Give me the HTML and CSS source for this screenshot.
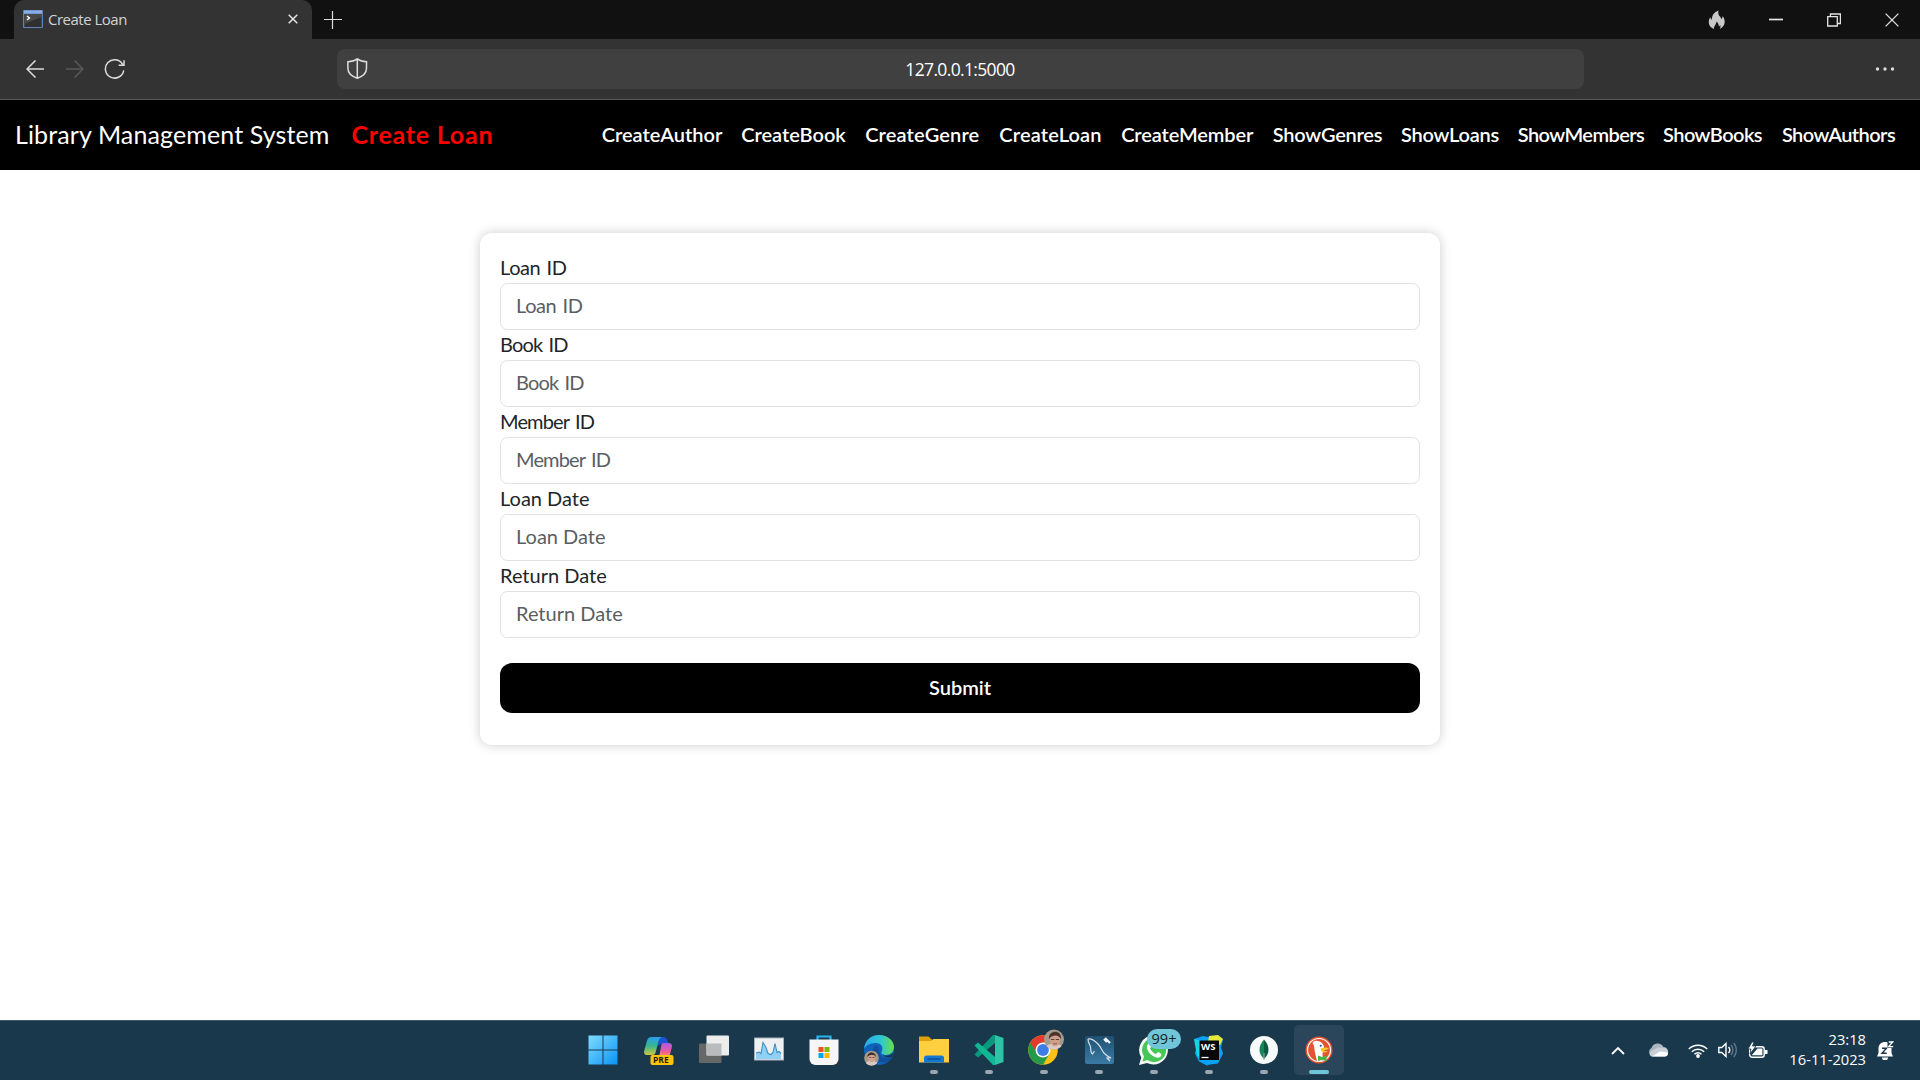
FILE: index.html
```
<!DOCTYPE html>
<html lang="en">
<head>
<meta charset="utf-8">
<title>Create Loan</title>
<link rel="stylesheet" href="styles.css">
</head>
<body>
<header class="tabstrip">
  <div class="tab">
    <svg class="favicon" width="20" height="18" viewBox="0 0 20 18"><rect width="20" height="18" rx="1" fill="#5d84bd"/><rect x="1" y="0.5" width="18" height="3" fill="#86ade8"/><path d="M15 1.2h3v1.3h-3z" fill="#b4a5cd"/><rect x="1.3" y="4" width="17.4" height="13" fill="#303030"/><path d="M1.3 4h17.4v3L1.3 14z" fill="#484848"/><path d="M4 6l2.4 2L4 10" fill="none" stroke="#fff" stroke-width="1.5"/></svg>
    <span class="tab-title">Create Loan</span>
    <svg class="tab-close" width="10" height="10" viewBox="0 0 10 10"><path d="M.7.7l8.6 8.6M9.3.7L.7 9.3" stroke="#e6e6e6" stroke-width="1.5"/></svg>
  </div>
  <svg class="new-tab" width="18" height="18" viewBox="0 0 18 18"><path d="M8.5 0v18M0 8.500h18" stroke="#ddd" stroke-width="1.200"/></svg>
  <div class="window-buttons">
    <svg width="18" height="20" viewBox="0 0 18 20"><path d="M6.2 18.9C2.6 17.8.6 15 .8 11.700c.1-2 .8-3.300 1.500-4.700.2 1.500.7 2.300 1.500 2.800C3.900 5.200 6 2 10.500.4 9.800 3 10.500 5 12 6.500c.7.8 1.100 1.700 1.200 2.600.8-.6 1.300-1.400 1.500-3.200 1.300 1.900 2.100 4 2 6.200-.1 3.100-1.900 5.600-5 6.800.9-1.200 1-2.500.4-3.800-.3.8-.7 1.200-1.300 1.500 0-2.100-.7-3.700-2.300-5-.1 2-.8 2.900-1.700 4.100-.9 1.200-1.100 2.300-.6 3.200z" fill="#c8c8c8"/></svg>
    <svg width="14" height="14" viewBox="0 0 14 14"><path d="M0 6.500h14" stroke="#e4e4e4" stroke-width="1.700"/></svg>
    <svg width="14" height="14" viewBox="0 0 14 14"><path d="M.7 3.700h9.600v9.300H.7zM3.400 3.500V1h10v9.500h-3" fill="none" stroke="#e4e4e4" stroke-width="1.300"/></svg>
    <svg width="14" height="14" viewBox="0 0 14 14"><path d="M.6.6l12.800 12.800M13.400.6L.6 13.400" stroke="#e4e4e4" stroke-width="1.300"/></svg>
  </div>
</header>
<div class="toolbar">
  <div class="nav-buttons">
    <svg width="18" height="18" viewBox="0 0 18 18"><path d="M9.500.5L1 9l8.500 8.500M1 9h17" fill="none" stroke="#dcdcdc" stroke-width="1.500"/></svg>
    <svg width="18" height="18" viewBox="0 0 18 18"><path d="M8.500.5L17 9l-8.500 8.500M17 9H0" fill="none" stroke="#595959" stroke-width="1.500"/></svg>
    <svg width="21" height="21" viewBox="0 0 21 21"><path d="M19.700 12.300A9.200 9.200 0 1 1 18.600 6.300M20 2.300v5h-5.300" fill="none" stroke="#dcdcdc" stroke-width="1.500"/></svg>
  </div>
  <div class="address">
    <svg class="shield" width="21" height="21" viewBox="0 0 21 21"><path d="M10.300.8c2.700 2 5.500 2.900 9.200 2.900v6.600c0 4.500-3.300 8-9.200 9.900C4.400 18.300.9 14.800.9 10.300V3.700c3.700 0 6.700-.9 9.400-2.900zV20" fill="none" stroke="#dedede" stroke-width="1.500"/></svg>
    <span class="url">127.0.0.1:5000</span>
  </div>
  <svg class="more" width="20" height="4" viewBox="0 0 20 4"><g fill="#dcdcdc"><circle cx="2.500" cy="2" r="1.700"/><circle cx="10" cy="2" r="1.700"/><circle cx="17.500" cy="2" r="1.700"/></g></svg>
</div>
<nav class="navbar">
  <span class="brand">Library Management System</span>
  <span class="page-name">Create Loan</span>
  <div class="links">
    <a>CreateAuthor</a><a>CreateBook</a><a class="wide">CreateGenre</a><a class="wide">CreateLoan</a><a class="snug">CreateMember</a><a class="tight">ShowGenres</a><a class="tight">ShowLoans</a><a class="tighter">ShowMembers</a><a class="tighter">ShowBooks</a><a class="tighter">ShowAuthors</a>
  </div>
</nav>
<main>
  <form class="card">
    <label class="sp-id" for="loan-id">Loan ID</label><input class="sp-id" id="loan-id" placeholder="Loan ID">
    <label class="sp-bid" for="book-id">Book ID</label><input class="sp-bid" id="book-id" placeholder="Book ID">
    <label class="sp-bid" for="member-id">Member ID</label><input class="sp-bid" id="member-id" placeholder="Member ID">
    <label for="loan-date">Loan Date</label><input id="loan-date" placeholder="Loan Date">
    <label for="return-date">Return Date</label><input id="return-date" placeholder="Return Date">
    <button type="button">Submit</button>
  </form>
</main>
<footer class="taskbar">
  <div class="apps">
    <div class="app start"><svg width="36" height="36" viewBox="0 0 36 36"><defs><linearGradient id="win" x1="0" y1="0" x2="1" y2="1"><stop offset="0" stop-color="#7fdcff"/><stop offset="1" stop-color="#0a93f5"/></linearGradient></defs><path d="M3.500 3.500h14v14h-14zM18.500 3.500h14v14h-14zM3.500 18.500h14v14h-14zM18.500 18.500h14v14h-14z" fill="url(#win)"/></svg></div>
    <div class="app"><svg width="36" height="36" viewBox="0 0 36 36"><defs><linearGradient id="cpa" x1="0" y1="0" x2="0" y2="1"><stop offset="0" stop-color="#2aa0f0"/><stop offset=".5" stop-color="#37b58f"/><stop offset="1" stop-color="#d0c63a"/></linearGradient><linearGradient id="cpb" x1="0" y1="0" x2="0" y2="1"><stop offset="0" stop-color="#a85be8"/><stop offset=".6" stop-color="#ed5b9d"/><stop offset="1" stop-color="#ff9a52"/></linearGradient></defs><path d="M16 5h6c3 0 4 2 4.500 4l.8 2.500h-6L16 14z" fill="#1d52d0"/><path d="M11 5h10c-3 1-3.500 4-4.500 8l-1.500 6c-.8 3-1.500 4-4 4H6c-3 0-3.300-2.500-2.600-5l2.500-9C6.700 6.500 8 5 11 5z" fill="url(#cpa)"/><path d="M21.500 11h6c3 0 4 1.500 3.300 4.500L28.300 25h-12c2 0 2.300-3 2.700-5l1.300-7z" fill="url(#cpb)"/><rect x="9.500" y="23" width="23" height="10" rx="2" fill="#ffc20e"/></svg><span class="pre">PRE</span></div>
    <div class="app"><svg width="36" height="36" viewBox="0 0 36 36"><rect x="3" y="11.500" width="22.500" height="19.500" rx="1" fill="#666767"/><rect x="10.500" y="3.500" width="22.500" height="20" rx="1" fill="#ededed"/><path d="M10.500 11.500h15v12h-15z" fill="#b9bbbc"/></svg></div>
    <div class="app"><svg width="36" height="36" viewBox="0 0 36 36"><rect x="3.500" y="6" width="29" height="22" fill="#eef0f2" stroke="#a9b3bd"/><path d="M5 27v-6l3-1 2 1.500 2-11 3 5 2 6 3 1 2-2 2-9 2 9 2-1 2 2v5.500z" fill="#8fd0f5"/><path d="M5 21l3-1 2 1.500 2-11 3 5 2 6 3 1 2-2 2-9 2 9 2-1 2 2" fill="none" stroke="#3b8ec4" stroke-width="1.100"/></svg></div>
    <div class="app"><svg width="36" height="36" viewBox="0 0 36 36"><path d="M11.500 9V4.500h13V9" fill="none" stroke="#2bb3ee" stroke-width="2.200"/><path d="M3.500 7.500h29V27a6 6 0 0 1-6 6h-17a6 6 0 0 1-6-6z" fill="#f6f6f6"/><path d="M12.500 15h5v5h-5z" fill="#f25022"/><path d="M18.500 15h5v5h-5z" fill="#7fba00"/><path d="M12.500 21h5v5h-5z" fill="#00a4ef"/><path d="M18.500 21h5v5h-5z" fill="#ffb900"/></svg></div>
    <div class="app"><svg width="36" height="36" viewBox="0 0 36 36"><defs><linearGradient id="eda"><stop offset="0" stop-color="#2aa8ec"/><stop offset=".55" stop-color="#2fc6d4"/><stop offset="1" stop-color="#68df4c"/></linearGradient></defs><circle cx="18" cy="18" r="15" fill="#0e62b8"/><path d="M3 17C4 8 10 3 18 3c9 0 15 6 15 12 0 5-4 8-8 8-3 0-5-1-4.500-3 2-3 1-9-5.500-9-5 0-10 2-12 6z" fill="url(#eda)"/><path d="M22 23c4 1.500 8 .5 11-2.500L31 25c-3 1-7 .5-9-2z" fill="#19384c"/><path d="M15 13c-6 4-4 15 4 17 5 1.500 10-1 12-5-4 2-9 1.500-11-1-3-4-.500-8-5-11z" fill="#124f9c"/><circle cx="10.500" cy="26" r="7.300" fill="#a39a8a"/><path d="M4.800 31c2-3 9.500-3 11.500 0a7.300 7.300 0 0 1-11.500 0z" fill="#d9c9c4"/><ellipse cx="10.800" cy="25.800" rx="3.600" ry="4.600" fill="#d3a18d"/><path d="M6.500 25c-.5-6 8.500-6 8.300 0-1.500-3-6-3-8.300 0z" fill="#3c2a27"/><path d="M8.300 25.500h2m1.200 0h2" stroke="#4a3531" stroke-width=".8"/></svg></div>
    <div class="app running"><svg width="36" height="36" viewBox="0 0 36 36"><path d="M3 4.500h9.500l4 3.500v4H3z" fill="#dea008"/><path d="M3 9h12l2.500-2H33v23.500H3z" fill="#ffcf42"/><path d="M8 30.500V26a2.500 2.500 0 0 1 2.500-2.500h15A2.500 2.500 0 0 1 28 26v4.500z" fill="#1478d2"/><path d="M11.500 27h13" stroke="#0b4a8f" stroke-width="1.300"/></svg></div>
    <div class="app running"><svg width="36" height="36" viewBox="0 0 36 36"><path d="M24 3v30l8.500-3V6z" fill="#2cc4a5"/><path d="M3.500 22.500L22 3l2 0v8L7 25.500z" fill="#099a7d"/><path d="M3.500 13.500L7 10.500 24 25v8l-2 0z" fill="#11b795"/></svg></div>
    <div class="app running"><svg width="42" height="42" viewBox="0 0 42 42"><circle cx="20" cy="21" r="14.800" fill="#fbc116"/><path d="M20 21L7.200 13.600A14.800 14.800 0 0 0 20 35.800l7-12z" fill="#25994a"/><path d="M20 21V13.500h12.800A14.800 14.800 0 0 0 7.200 13.600L14 24z" fill="#e33b2e"/><circle cx="20" cy="21" r="7.500" fill="#fff"/><circle cx="20" cy="21" r="5.900" fill="#3e7de8"/><circle cx="31" cy="10.500" r="10" fill="#a59a8c"/><path d="M23.500 17c3-3 12-3 15 0a10 10 0 0 1-15 0z" fill="#dccac7"/><ellipse cx="32" cy="11" rx="5" ry="6.300" fill="#cf9f8b"/><path d="M26 10c-1-9 13-10 12 0-2-4-8-5-12 0z" fill="#4b342e"/><path d="M28 10.500h3.300m1.500 0H36" stroke="#57403a" stroke-width="1.200"/><path d="M30 14.500q2 1 4 0" fill="none" stroke="#8d5f52"/></svg></div>
    <div class="app running"><svg width="36" height="36" viewBox="0 0 36 36"><defs><linearGradient id="sql" x1="0" y1="0" x2="0" y2="1"><stop offset="0" stop-color="#1f5071"/><stop offset="1" stop-color="#3a7ba5"/></linearGradient></defs><rect x="4" y="4" width="29" height="28" rx="2" fill="url(#sql)"/><path d="M7 7c4-1 7 2 10 5 4 4 4 8 7 10 2 2 4 3 6 4l-4 0 3 3M7 7c0 4 2 5 2.500 8 .5 3 0 6 2 7l2-3" fill="none" stroke="#d2e0e9" stroke-width="1.200"/><path d="M23 7l3 3M24 6l5 5" stroke="#eef4f7" stroke-width="2.200"/></svg></div>
    <div class="app running"><svg width="36" height="36" viewBox="0 0 36 36"><path d="M18 3.500A14.500 14.500 0 1 1 11 31l-8 2 2.300-7.500A14.500 14.500 0 0 1 18 3.500z" fill="#f4f8f4"/><path d="M18 6a12 12 0 1 1-6.500 22L6.500 29.500 8 24.500A12 12 0 0 1 18 6z" fill="#46c756"/><path d="M12 12c1.500-1.500 2.500-1 3.500 2l-1.500 2.500c1.500 3 3.500 4.500 6 5.500l2-2c3 1 4 2 3 4-1.500 2.500-5 2-8 0-4-2.500-8-8-5-12z" fill="#fff"/></svg><span class="badge">99+</span></div>
    <div class="app running"><svg width="36" height="36" viewBox="0 0 36 36"><path d="M3 7l9-3 5 1 9-1.500 6 4-2 8 2 6-5 10-8 1-3 1-8-4-4-8 2-8z" fill="#0aa2f5"/><path d="M3 7l8 2-2 16-3-1z" fill="#17d3e5"/><path d="M18 4l9-1 5 4-3 6-12-3z" fill="#e3e93f"/><rect x="8.500" y="8.500" width="19.500" height="19.500" fill="#080808"/><path d="M10.500 25.500h7" stroke="#fff" stroke-width="1.300"/></svg><span class="ws">WS</span></div>
    <div class="app running"><svg width="36" height="36" viewBox="0 0 36 36"><circle cx="18" cy="18" r="14" fill="#f8f9f9"/><path d="M18 7.500c6 6.500 6 14 0 19.500z" fill="#0b5b42"/><path d="M18 7.500c-6 6.500-6 14 0 19.500z" fill="#15845a"/><path d="M18 21v7" stroke="#9ab5a8"/></svg></div>
    <div class="app running active"><svg width="36" height="36" viewBox="0 0 36 36"><circle cx="18" cy="18" r="13.500" fill="#e65332"/><circle cx="18" cy="18" r="11.500" fill="none" stroke="#fff" stroke-width="1.200"/><path d="M11.500 11c1-2 3-2.500 5-2 4 .5 6.500 3 6.500 7 0 3-1.500 4-1.500 6l.5 6.500c-2 .8-4 .8-6 .3-1-4-2-7.500-2.500-11-.4-3 0-4.300-2-6.800z" fill="#fff"/><path d="M19.500 16.500c3-1.500 7-1.500 8.500 0-1.500 1.500-3.500 1.300-5 2 1 .8 3 .5 3.800 1-2 1.800-7.300 1.300-7.300-3z" fill="#fdc52c"/><path d="M17 23.500l4 1.500 4.500-1.500v5.500L21 28l-4 1z" fill="#43b649"/><circle cx="19.700" cy="13.700" r="1" fill="#2a486b"/></svg></div>
  </div>
  <div class="tray">
    <svg class="chevron" width="14" height="9" viewBox="0 0 14 9"><path d="M1 8l6-6 6 6" fill="none" stroke="#fff" stroke-width="1.800"/></svg>
    <svg class="cloud" width="21" height="14" viewBox="0 0 21 14"><path d="M4 12.500A4 4 0 0 1 3.500 5 6.500 6.500 0 0 1 15.500 4a4.700 4.700 0 0 1 1.500 9z" fill="#aab6bf"/><path d="M3.500 13.500a3 3 0 0 1-1-5L10 4.500l6.500.500a4.500 4.500 0 0 1 1 8.500z" fill="#c8d0d5"/><path d="M4 13.500l8-5 8 1a3.700 3.700 0 0 1-3.500 4z" fill="#fff"/></svg>
    <svg class="wifi" width="20" height="15" viewBox="0 0 20 15"><g fill="none" stroke="#fff" stroke-width="1.500"><path d="M.8 6a13 13 0 0 1 18.400 0M3.800 8.700a9 9 0 0 1 12.400 0M6.500 11.300a5 5 0 0 1 7 0"/></g><circle cx="10" cy="13" r="1.900" fill="#fff"/></svg>
    <svg class="sound" width="20" height="16" viewBox="0 0 20 16"><path d="M.8 5.500h3L8 1.500v13l-4.200-4h-3z" fill="none" stroke="#fff" stroke-width="1.400"/><path d="M10.500 5a4.500 4.500 0 0 1 0 6" fill="none" stroke="#fff" stroke-width="1.400"/><path d="M13 3a7.500 7.500 0 0 1 0 10M15.800 1a11 11 0 0 1 0 14" fill="none" stroke="#62798a" stroke-width="1.400"/></svg>
    <svg class="battery" width="20" height="17" viewBox="0 0 20 17"><rect x="1.700" y="4.700" width="14.500" height="10.500" rx="2.500" fill="none" stroke="#fff" stroke-width="1.400"/><path d="M3.700 13.200l5.800-6.700h4.900v6.700zM17 8h2.500v4H17z" fill="#fff"/><path d="M4 0L0 7h3l-1 5 6-8H4.500L6 0z" fill="#fff" stroke="#19384c" stroke-width=".8"/></svg>
    <div class="clock"><span>23:18</span><span>16-11-2023</span></div>
    <svg class="bell" width="17" height="19" viewBox="0 0 17 19"><path d="M0 15.500l1.500-3.500V7.500c0-4 2.700-6.500 6.500-6.500s6.500 2.500 6.500 6.500V12l1.500 3.500zM5 16.500h6a3 3 0 0 1-6 0z" fill="#fff"/><path d="M5 7.200h4.500L5 12.200h4.700" fill="none" stroke="#19384c" stroke-width="1.400"/><path d="M10.500 0H17v6.800h-6.500z" fill="#19384c"/><path d="M11.700 1h4l-4 4.700h4.500" fill="none" stroke="#fff" stroke-width="1.300"/></svg>
  </div>
</footer>
</body>
</html>
```
FILE: styles.css
```
* { box-sizing: border-box; }
body {
  margin: 0;
  height: 1080px;
  display: flex;
  flex-direction: column;
  background: #fff;
  color: #212529;
  font: 400 20px/30px Lato, "Open Sans", sans-serif;
  overflow: hidden;
}
svg { display: block; flex: none; }

/* Browser window */
.tabstrip {
  height: 39px;
  display: flex;
  align-items: center;
  padding-left: 14px;
  background: #111;
  font: 15px/20px "Open Sans", "Noto Sans", sans-serif;
}
.tab {
  width: 298px;
  height: 39px;
  display: flex;
  align-items: center;
  padding: 0 14px 1px 9px;
  border-radius: 10px 10px 0 0;
  background: #333;
  color: #d2d2d2;
}
.tab-title { margin-left: 5px; padding-bottom: 1px; letter-spacing: -0.5px; }
.tab-close { margin-left: auto; }
.new-tab { margin-left: 12px; }
.window-buttons {
  margin-left: auto;
  padding-right: 21px;
  display: flex;
  align-items: center;
  gap: 44px;
}
.window-buttons svg:first-child { margin-right: -1px; }
.toolbar {
  height: 61px;
  display: flex;
  align-items: center;
  padding: 0 25px 0 26px;
  background: #333;
  border-bottom: 1px solid #595959;
}
.nav-buttons {
  width: 311px;
  display: flex;
  align-items: center;
  gap: 22px;
  padding-bottom: 1px;
}
.nav-buttons svg:last-child { margin-left: -2px; }
.address {
  width: 1247px;
  height: 40px;
  display: flex;
  align-items: center;
  padding: 0 10px;
  border-radius: 8px;
  background: #404040;
  color: #fff;
}
.shield { margin-top: -1px; }
.url {
  flex: 1;
  margin-right: 22px;
  text-align: center;
  font: 17.5px/24px "Open Sans", "Noto Sans", sans-serif;
  letter-spacing: -0.65px;
}
.more { margin-left: auto; }

/* Site navigation */
.navbar {
  height: 70px;
  display: flex;
  align-items: center;
  padding: 0 14px 2px 15px;
  background: #000;
  color: #fff;
}
.brand { font-size: 25px; letter-spacing: 0.12px; }
.page-name {
  margin-left: 22px;
  color: #f00;
  font-size: 25px;
  font-weight: 700;
  letter-spacing: 0.75px;
}
.links {
  margin-left: auto;
  display: grid;
  grid-template-columns: 140px 123px 134.500px 122px 151.500px 129px 116px 146px 117px 135px;
  font-weight: 600;
  text-align: center;
}
.links .wide { letter-spacing: 0.15px; }
.links .snug { letter-spacing: -0.1px; }
.links .tight { letter-spacing: -0.25px; }
.links .tighter { letter-spacing: -0.55px; }

/* Loan form */
main { flex: 1; padding-top: 63px; }
.card {
  width: 960px;
  height: 512px;
  margin: 0 auto;
  padding: 20px;
  border-radius: 12px;
  box-shadow: 0 0 12px rgba(0, 0, 0, 0.2);
}
label { display: block; height: 30px; line-height: 28px; }
input {
  display: block;
  width: 100%;
  height: 47px;
  padding: 6px 15px 9px;
  border: 1px solid #dee2e6;
  border-radius: 7.5px;
  background: #fff;
  font: inherit;
}
input::placeholder { color: #5a5e63; opacity: 1; }
.sp-id { letter-spacing: -0.4px; word-spacing: 1.500px; }
.sp-bid { letter-spacing: -0.85px; word-spacing: 2px; }
button {
  width: 100%;
  height: 50px;
  margin-top: 25px;
  padding: 0 0 2px;
  border: 0;
  border-radius: 12px;
  background: #000;
  color: #fff;
  font: 600 20px/30px Lato, sans-serif;
}

/* Taskbar */
.taskbar {
  height: 60px;
  display: flex;
  align-items: center;
  padding: 0 26px 1px 579px;
  border-top: 1px solid #3d5868;
  background: #19384c;
  color: #fff;
}
.apps { display: flex; gap: 5px; }
.app {
  position: relative;
  width: 50px;
  height: 50px;
  display: flex;
  align-items: center;
  justify-content: center;
  border-radius: 5px;
}
.start { padding-right: 3px; }
.active { background: #2b465a; }
.running::after {
  content: "";
  position: absolute;
  left: 21px;
  bottom: 1px;
  width: 8px;
  height: 4px;
  border-radius: 2px;
  background: #9aa7b1;
}
.active::after { left: 15px; width: 20px; background: #70c5d8; }
.pre {
  position: absolute;
  left: 19px;
  top: 31px;
  color: #221b00;
  font: 700 8.500px/8px "Open Sans", sans-serif;
}
.badge {
  position: absolute;
  left: 18px;
  top: 4px;
  width: 34px;
  height: 20px;
  border-radius: 10px;
  background: #70c5d8;
  color: #10242c;
  font: 14.500px/20px "Open Sans", sans-serif;
  text-align: center;
}
.ws {
  position: absolute;
  left: 17px;
  top: 17px;
  font: 700 9.500px/9px "Open Sans", sans-serif;
}
.tray { margin-left: auto; display: flex; align-items: center; }
.chevron { margin-right: 23px; }
.cloud { margin-right: 19px; }
.wifi { margin-right: 10px; }
.sound { margin-right: 10px; }
.battery { margin-right: 21px; }
.clock {
  display: flex;
  flex-direction: column;
  align-items: flex-end;
  margin-right: 11px;
  padding-bottom: 2px;
  font: 14.700px/20px "Open Sans", "Noto Sans", sans-serif;
}
```
